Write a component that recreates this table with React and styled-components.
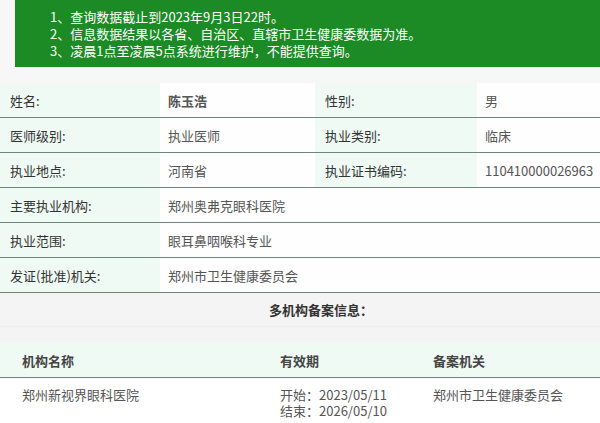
import React from "react";
import styled, { createGlobalStyle } from "styled-components";

const GlobalStyle = createGlobalStyle`
  html, body {
    margin: 0;
    padding: 0;
    background: #f6f7f6;
    font-family: "Noto Sans CJK SC", "Noto Sans", sans-serif;
    font-size: 13px;
  }
`;

const Page = styled.div`
  width: 600px;
  height: 423px;
  overflow: hidden;
  background: #f6f7f6;
`;

const Notice = styled.ol`
  list-style: none;
  margin: 0 0 16px 15px;
  padding: 8px 0 8px 35px;
  background: #1c8a25;
  color: #ffffff;
  font-size: 13px;
  line-height: 17px;
  height: 51px;
`;

const InfoTable = styled.div`
  display: grid;
  grid-template-columns: 160px 155px 162px 1fr;
  background: #ffffff;
`;

const Cell = styled.div`
  height: 34px;
  display: flex;
  align-items: center;
  padding-left: ${(p) => (p.$label ? "10px" : "8px")};
  border-bottom: 1px solid #6f857c;
  background: ${(p) => (p.$label ? "#effaf5" : "#fdfefd")};
  color: ${(p) => (p.$label ? "#333333" : "#555555")};
  font-weight: ${(p) => (p.$bold ? 700 : 400)};
  grid-column: ${(p) => (p.$wide ? "span 3" : "auto")};
  white-space: nowrap;
`;

const Section = styled.div`
  background: #f5f4f4;
`;

const SectionTitle = styled.div`
  height: 33px;
  display: flex;
  align-items: center;
  justify-content: center;
  padding-left: 42px;
  font-weight: 700;
  color: #333333;
  border-bottom: 1px solid #ecefee;
  margin-bottom: 16px;
`;

const SubTable = styled.div`
  display: grid;
  grid-template-columns: 258px 153px 1fr;
  padding-left: 10px;
`;

const HeadCell = styled.div`
  height: 34px;
  display: flex;
  align-items: center;
  background: #effaf5;
  border-bottom: 1px solid #6f857c;
  color: #444444;
  font-weight: 600;
  margin-left: ${(p) => (p.$first ? "-10px" : "0")};
  padding-left: ${(p) => (p.$first ? "22px" : "12px")};
`;

const BodyCell = styled.div`
  background: #ffffff;
  padding-top: 9px;
  color: #555555;
  line-height: 16px;
  margin-left: ${(p) => (p.$first ? "-10px" : "0")};
  padding-left: ${(p) => (p.$first ? "22px" : "12px")};
  height: 45px;
`;

const rows = [
  [
    ["姓名:", "陈玉浩", true],
    ["性别:", "男"],
  ],
  [
    ["医师级别:", "执业医师"],
    ["执业类别:", "临床"],
  ],
  [
    ["执业地点:", "河南省"],
    ["执业证书编码:", "110410000026963"],
  ],
  [["主要执业机构:", "郑州奥弗克眼科医院"]],
  [["执业范围:", "眼耳鼻咽喉科专业"]],
  [["发证(批准)机关:", "郑州市卫生健康委员会"]],
];

const App = () => (
  <Page>
    <GlobalStyle />
    <Notice>
      <li>1、查询数据截止到2023年9月3日22时。</li>
      <li>2、信息数据结果以各省、自治区、直辖市卫生健康委数据为准。</li>
      <li>3、凌晨1点至凌晨5点系统进行维护，不能提供查询。</li>
    </Notice>
    <InfoTable>
      {rows.map((row) =>
        row.map(([label, value, bold]) => (
          <React.Fragment key={label}>
            <Cell $label>{label}</Cell>
            <Cell $bold={bold} $wide={row.length === 1}>
              {value}
            </Cell>
          </React.Fragment>
        ))
      )}
    </InfoTable>
    <Section>
      <SectionTitle>多机构备案信息：</SectionTitle>
      <SubTable>
        <HeadCell $first>机构名称</HeadCell>
        <HeadCell>有效期</HeadCell>
        <HeadCell>备案机关</HeadCell>
        <BodyCell $first>郑州新视界眼科医院</BodyCell>
        <BodyCell>
          开始：2023/05/11
          <br />
          结束：2026/05/10
        </BodyCell>
        <BodyCell>郑州市卫生健康委员会</BodyCell>
      </SubTable>
    </Section>
  </Page>
);

export default App;
